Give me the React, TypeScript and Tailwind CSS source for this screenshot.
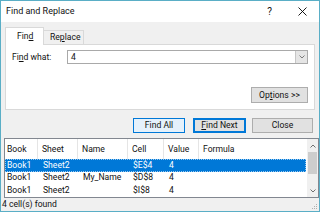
import React from 'react';

const font = { fontFamily: 'Roboto, "Noto Sans", sans-serif' };

const rows = [
  { book: 'Book1', sheet: 'Sheet2', name: '', cell: '$E$4', value: '4', selected: true },
  { book: 'Book1', sheet: 'Sheet2', name: 'My_Name', cell: '$D$8', value: '4' },
  { book: 'Book1', sheet: 'Sheet2', name: '', cell: '$I$8', value: '4' }
];

const cols = 'grid grid-cols-[33px_40px_50px_36px_35px_1fr]';

function U({ children }: { children: React.ReactNode }) {
  return <span className="underline underline-offset-[1px]">{children}</span>;
}

export default function App() {
  return (
    <div
      className="flex h-[212px] w-[320px] flex-col border border-[#5aaec6] bg-[#f0f0f0] text-[8.6px] leading-none text-[#111]"
      style={font}
    >
      {/* title bar */}
      <div className="flex h-[21px] items-center bg-white pl-[5px] text-[9px]">
        <span className="flex-1">Find and Replace</span>
        <span className="flex w-[33px] justify-center text-[10px]">?</span>
        <span className="flex w-[33px] justify-center">
          <svg width="9" height="9" viewBox="0 0 9 9" className="stroke-black">
            <path d="M0.5 0.5 L8.5 8.5 M8.5 0.5 L0.5 8.5" strokeWidth="0.9" />
          </svg>
        </span>
      </div>

      <div className="flex flex-1 flex-col">
        {/* tabs */}
        <div className="mt-[5px] flex items-end pl-[4px]">
          <div className="relative z-10 -mb-px flex h-[18px] w-[39px] items-center border border-b-0 border-[#d9d9d9] bg-white pl-[11px]">
            <span>
              Fin<U>d</U>
            </span>
          </div>
          <div className="flex h-[14px] w-[40px] items-center border border-l-0 border-b-0 border-[#d9d9d9] bg-[#f0f0f0] pl-[6px]">
            <span>
              Re<U>p</U>lace
            </span>
          </div>
        </div>

        {/* tab panel */}
        <div className="mx-[4px] flex h-[66px] flex-col border border-[#d9d9d9] bg-white px-[6px]">
          <div className="mt-[5px] flex items-center">
            <span className="w-[55px]">
              Fi<U>n</U>d what:
            </span>
            <div className="flex h-[14px] flex-1 items-center border border-[#a9a9a9] bg-white">
              <span className="flex-1 pl-[3px]">4</span>
              <div className="flex h-full w-[12px] items-center justify-center border-l border-[#c6c6c6] bg-[#e5e5e5]">
                <svg width="6" height="4" viewBox="0 0 6 4" fill="none" stroke="#606060">
                  <path d="M0.5 0.5 L3 3 L5.5 0.5" strokeWidth="0.8" />
                </svg>
              </div>
            </div>
          </div>
          <div className="mt-auto mb-[6px] flex justify-end">
            <div className="flex h-[16px] w-[57px] items-center justify-center border border-[#adadad] bg-[#e1e1e1]">
              <span>
                Op<U>t</U>ions &gt;&gt;
              </span>
            </div>
          </div>
        </div>

        {/* buttons */}
        <div className="mt-[8px] flex pl-[132px]">
          <div className="flex h-[15px] w-[52px] items-center justify-center border border-[#0078d7] bg-[#e5f1fb]">
            <span>Find All</span>
          </div>
          <div className="ml-[8px] flex h-[15px] w-[53px] items-center justify-center border-2 border-[#0078d7] bg-[#e1e1e1]">
            <span>
              <U>F</U>ind Next
            </span>
          </div>
          <div className="ml-[6px] flex h-[15px] w-[61px] items-center justify-center border border-[#adadad] bg-[#e1e1e1]">
            <span>Close</span>
          </div>
        </div>

        {/* results list */}
        <div className="mt-[5px] ml-[3px] flex h-[60px] overflow-hidden border border-[#828790] bg-white">
          <div className="flex-1">
            <div className={`${cols} h-[20px] items-center`}>
              {['Book', 'Sheet', 'Name', 'Cell', 'Value', 'Formula'].map((h, i) => (
                <div
                  key={h}
                  className={`flex h-full items-center ${i < 5 ? 'border-r border-[#e5e5e5]' : ''} ${i === 0 ? 'pl-[2px]' : 'pl-[4px]'}`}
                >
                  {h}
                </div>
              ))}
            </div>
            {rows.map((r) => (
              <div
                key={r.cell}
                className={`${cols} h-[12.5px] items-center ${
                  r.selected ? 'mr-[1px] border border-dotted border-[#99c9ef] bg-[#0078d7] text-white' : 'border border-transparent'
                }`}
              >
                <div className="pl-[1px]">{r.book}</div>
                <div className="pl-[4px]">{r.sheet}</div>
                <div className="pl-[4px]">{r.name}</div>
                <div className="pl-[4px]">{r.cell}</div>
                <div className="pl-[4px]">{r.value}</div>
                <div />
              </div>
            ))}
          </div>
          {/* scrollbar */}
          <div className="flex w-[11px] flex-col bg-[#f0f0f0]">
            <div className="flex h-[13px] items-center justify-center">
              <svg width="6" height="4" viewBox="0 0 6 4" fill="none" stroke="#606060">
                <path d="M0.5 3.5 L3 1 L5.5 3.5" strokeWidth="0.9" />
              </svg>
            </div>
            <div className="mx-[1px] h-[22px] bg-[#cdcdcd]" />
            <div className="mt-auto flex h-[13px] items-center justify-center">
              <svg width="6" height="4" viewBox="0 0 6 4" fill="none" stroke="#606060">
                <path d="M0.5 0.5 L3 3 L5.5 0.5" strokeWidth="0.9" />
              </svg>
            </div>
          </div>
        </div>

        {/* status bar */}
        <div className="relative flex flex-1 items-center pl-[1px]">
          <span>4 cell(s) found</span>
          <svg width="6" height="6" viewBox="0 0 6 6" className="absolute right-[1px] bottom-[1px] fill-[#b0b0b0]">
            <rect x="4" y="0" width="1" height="1" />
            <rect x="2" y="2" width="1" height="1" />
            <rect x="4" y="2" width="1" height="1" />
            <rect x="0" y="4" width="1" height="1" />
            <rect x="2" y="4" width="1" height="1" />
            <rect x="4" y="4" width="1" height="1" />
          </svg>
        </div>
      </div>
    </div>
  );
}
